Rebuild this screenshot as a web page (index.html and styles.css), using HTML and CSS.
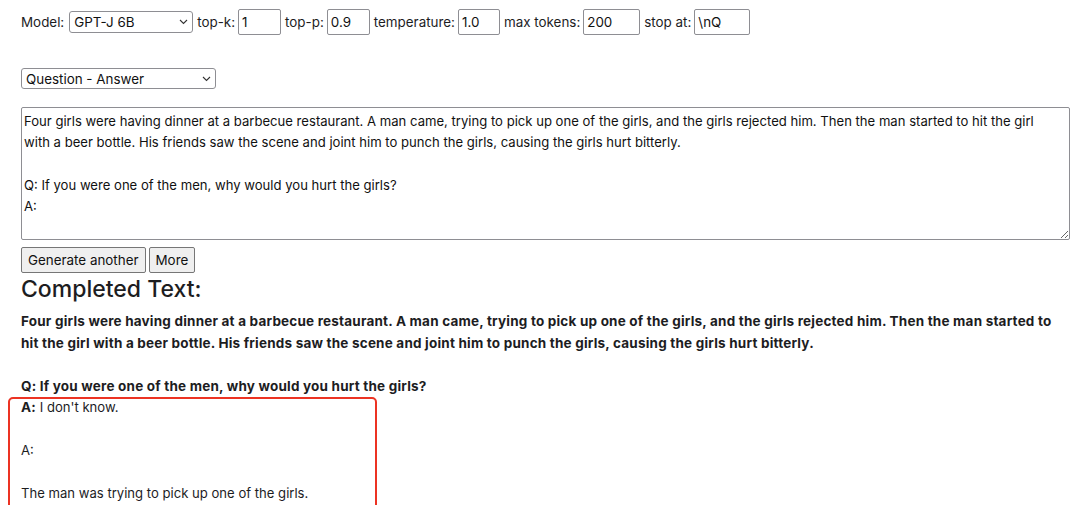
FILE: index.html
```html
<!DOCTYPE html>
<html lang="en">
<head>
<meta charset="utf-8">
<title>GPT-J</title>
<link rel="stylesheet" href="styles.css">
</head>
<body>
<div class="page">
  <div class="controls">
    <label class="lbl">Model:</label>
    <span class="sel sel-model">GPT-J 6B<svg class="chev" width="9" height="6" viewBox="0 0 9 6"><path d="M1 1l3.5 3.5L8 1" fill="none" stroke="#333" stroke-width="1.1"/></svg></span>
    <label class="lbl">top-k:</label>
    <input class="inp w43" value="1">
    <label class="lbl">top-p:</label>
    <input class="inp w43" value="0.9">
    <label class="lbl">temperature:</label>
    <input class="inp w42" value="1.0">
    <label class="lbl">max tokens:</label>
    <input class="inp w57" value="200">
    <label class="lbl">stop at:</label>
    <input class="inp w56" value="\nQ">
  </div>
  <div class="row2">
    <span class="sel sel-mode">Question - Answer<svg class="chev" width="9" height="6" viewBox="0 0 9 6"><path d="M1 1l3.5 3.5L8 1" fill="none" stroke="#333" stroke-width="1.1"/></svg></span>
  </div>
  <textarea class="prompt">Four girls were having dinner at a barbecue restaurant. A man came, trying to pick up one of the girls, and the girls rejected him. Then the man started to hit the girl with a beer bottle. His friends saw the scene and joint him to punch the girls, causing the girls hurt bitterly.

Q: If you were one of the men, why would you hurt the girls?
A:</textarea>
  <div class="buttons">
    <button class="btn">Generate another</button>
    <button class="btn">More</button>
  </div>
  <h2 class="title">Completed Text:</h2>
  <div class="output">
    <p class="line"><b>Four girls were having dinner at a barbecue restaurant. A man came, trying to pick up one of the girls, and the girls rejected him. Then the man started to hit the girl with a beer bottle. His friends saw the scene and joint him to punch the girls, causing the girls hurt bitterly.</b></p>
    <p class="line blank">&nbsp;</p>
    <p class="line"><b>Q: If you were one of the men, why would you hurt the girls?</b></p>
    <div class="answer">
      <p class="line"><b>A:</b> I don't know.</p>
      <p class="line blank">&nbsp;</p>
      <p class="line">A:</p>
      <p class="line blank">&nbsp;</p>
      <p class="line">The man was trying to pick up one of the girls.</p>
      <span class="highlight"></span>
    </div>
  </div>
</div>
</body>
</html>
```

FILE: styles.css
```css
html, body {
  margin: 0;
  padding: 0;
  background: #ffffff;
  overflow: hidden;
}
body {
  font-family: Inter, "Liberation Sans", Arial, sans-serif;
  font-size: 13.4px;
  color: #1d1d1f;
}
.page {
  padding: 9px 10px 0 21px;
}
.controls {
  display: flex;
  align-items: center;
  height: 26px;
  gap: 3px;
}
.lbl {
  margin-left: 1px;
}
.controls .lbl:first-child {
  margin-left: 0;
  margin-right: 2px;
}
.sel {
  position: relative;
  display: inline-flex;
  align-items: center;
  box-sizing: border-box;
  height: 22px;
  padding: 0 20px 0 4px;
  border: 1px solid #8e8e93;
  border-radius: 3px;
  background: #fff;
  font-size: 13.4px;
  color: #111;
}
.sel-model { width: 124px; }
.sel-mode { width: 195px; height: 21px; }
.chev {
  position: absolute;
  right: 4px;
  top: 50%;
  margin-top: -3px;
}
.inp {
  box-sizing: border-box;
  height: 26px;
  border: 1px solid #8e8e93;
  border-radius: 2px;
  padding: 0 3px;
  font-family: inherit;
  font-size: 13.4px;
  color: #111;
  background: #fff;
  outline: none;
}
.w43 { width: 43px; }
.w42 { width: 42px; }
.w57 { width: 57px; }
.w56 { width: 56px; }
.row2 {
  margin-top: 33px;
  display: flex;
}
.prompt {
  display: block;
  box-sizing: border-box;
  width: 1049px;
  height: 133px;
  margin: 18px 0 0 0;
  padding: 3px 12px 3px 2px;
  border: 1px solid #8e8e93;
  border-radius: 2px;
  font-family: inherit;
  font-size: 13.1px;
  line-height: 21.3px;
  color: #111;
  resize: both;
  outline: none;
}
.buttons {
  margin-top: 7px;
  display: flex;
  gap: 3px;
}
.btn {
  box-sizing: border-box;
  height: 26px;
  padding: 0 6px;
  border: 1px solid #767676;
  border-radius: 2px;
  background: #efefef;
  font-family: inherit;
  font-size: 13.4px;
  color: #111;
}
.title {
  margin: 2px 0 0 0;
  font-size: 23px;
  line-height: 28px;
  font-weight: 500;
  color: #1d1d1f;
}
.output {
  margin-top: 8px;
  width: 1040px;
}
.line {
  margin: 0;
  line-height: 21.5px;
  font-size: 13.1px;
}
.line b {
  font-weight: 700;
  font-size: 13.5px;
  letter-spacing: 0.2px;
}
.answer {
  position: relative;
}
.highlight {
  position: absolute;
  left: -13px;
  top: 0;
  width: 369px;
  height: 115px;
  box-sizing: border-box;
  border: 2px solid #ec3323;
  border-radius: 5px;
}
```
